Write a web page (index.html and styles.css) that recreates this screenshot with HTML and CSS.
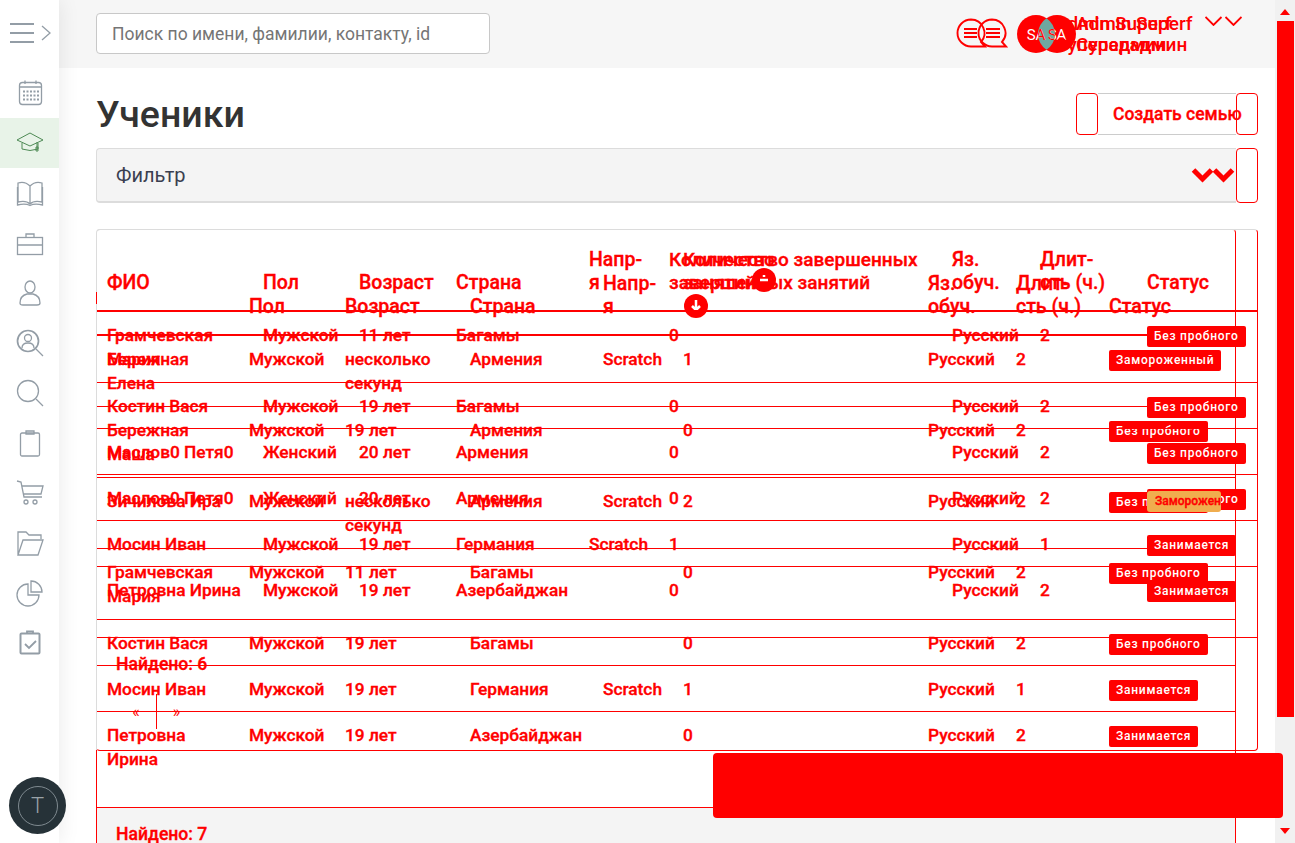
FILE: index.html
```html
<!DOCTYPE html>
<html lang="ru">
  <head>
    <meta charset="UTF-8" />
    <title>Ученики</title>
    <link rel="stylesheet" href="styles.css">
  </head>
  <body>
    <!-- Sidebar -->
    <aside class="sidebar">
      <div class="menu-toggle">
        <svg width="59" height="68" viewBox="0 0 59 68"><path d="M10 24H34M10 33H34M10 42H34" stroke-width="2"/><path d="M42 26L50 33L42 40"/></svg>
      </div>
      <div class="side-item"><svg width="28" height="28" viewBox="0 0 28 28"><rect x="3.5" y="3.5" width="22" height="22" rx="3"/><path d="M9 1.5V5M20 1.5V5M3.5 8H25.5"/><path class="dots" d="M7 12.5H23M7 16.5H23M7 20.5H23"/></svg></div>
      <div class="side-item active"><svg width="28" height="28" viewBox="0 0 28 28"><path d="M1 11L14 4L27 11L14 17Z"/><path d="M6 14V20Q14 23 22 20V14M21 13V21"/><path d="M20 18H22V22H20Z"/></svg></div>
      <div class="side-item"><svg width="28" height="28" viewBox="0 0 28 28"><path d="M14 7C10 3 5 3 2 4V23C6 22 11 22 14 25C17 22 22 22 26 23V4C23 3 18 3 14 7ZM14 7V25"/><path d="M1.5 8V26C6 25 11 25 14 26.5C17 25 22 25 26.5 26V8"/></svg></div>
      <div class="side-item"><svg width="28" height="28" viewBox="0 0 28 28"><rect x="1.5" y="8.5" width="25" height="17"/><path d="M10 8V5H18V8M1.5 16H26.5"/></svg></div>
      <div class="side-item"><svg width="28" height="28" viewBox="0 0 28 28"><ellipse cx="14" cy="8" rx="5" ry="6"/><path d="M4 24C4 19 7 16 11 15H17C21 16 24 19 24 24C24 26 22 26 21 26H7C6 26 4 26 4 24Z"/></svg></div>
      <div class="side-item"><svg width="28" height="28" viewBox="0 0 28 28"><circle cx="12" cy="12" r="10.5" stroke-width="1.7"/><circle cx="12" cy="9" r="3.5"/><path d="M6 19C6 15 9 14 12 14S18 15 18 19M20 20L27 27"/></svg></div>
      <div class="side-item"><svg width="28" height="28" viewBox="0 0 28 28"><circle cx="12" cy="12" r="10.5"/><path d="M20 20L27 27"/></svg></div>
      <div class="side-item"><svg width="28" height="28" viewBox="0 0 28 28"><rect x="4.5" y="4" width="19" height="23" rx="1.5"/><path d="M10 4V2H18V5H10Z"/></svg></div>
      <div class="side-item"><svg width="28" height="28" viewBox="0 0 28 28"><path d="M1 2L5 3L8 18H26M6 7H27L25 15H8"/><circle cx="10" cy="23" r="2"/><circle cx="19" cy="23" r="2"/></svg></div>
      <div class="side-item"><svg width="28" height="28" viewBox="0 0 28 28"><path d="M2 26V3H10L13 6H25V10M2 26H22L27 11H7Z"/></svg></div>
      <div class="side-item"><svg width="28" height="28" viewBox="0 0 28 28"><path d="M12 5A11 11 0 1 0 23 16H12Z"/><path d="M15 2A11 11 0 0 1 26 13H15Z"/></svg></div>
      <div class="side-item"><svg width="28" height="28" viewBox="0 0 28 28"><rect x="4.5" y="4.5" width="19" height="20" rx="1" stroke-width="2"/><path d="M11 4V2.5H17V4M9 15L13 19L20 12" stroke-width="1.8"/></svg></div>
      <div class="fab"><span class="fab-ring">T</span></div>
    </aside>

    <!-- Main column -->
    <div class="main">
      <header class="topbar">
        <input class="search" type="text" placeholder="Поиск по имени, фамилии, контакту, id" />
        <div class="top-right">
          <svg class="chats" width="52" height="32" viewBox="0 0 52 32">
            <path d="M15 1.5A13.5 13.5 0 1 0 15 28.5H29L25 24A13.5 13.5 0 0 0 15 1.5Z"/>
            <path d="M36 1.5A13.5 13.5 0 1 0 36 28.5H50L46 24A13.5 13.5 0 0 0 36 1.5Z"/>
            <path d="M8 11H21M8 15H21M8 19H21M30 11H44M30 15H44M30 19H44"/>
          </svg>
          <svg class="avatars" width="59" height="38" viewBox="0 0 59 38">
            <defs><clipPath id="lens"><path d="M29.5 3.2A19 19 0 0 1 29.5 34.8A19 19 0 0 1 29.5 3.2Z"/></clipPath></defs>
            <circle cx="19" cy="19" r="19"/>
            <circle cx="40" cy="19" r="19"/>
            <path class="lens" d="M29.5 3.2A19 19 0 0 1 29.5 34.8A19 19 0 0 1 29.5 3.2Z"/>
            <text class="av-text" x="19" y="24.5">SA</text>
            <text class="av-text" x="40" y="24.5">SA</text>
            <g clip-path="url(#lens)">
              <text class="av-text over" x="19" y="24.5">SA</text>
              <text class="av-text over" x="40" y="24.5">SA</text>
            </g>
          </svg>
          <div class="who-stack">
            <div class="who">Admin Superf<br>Суперадмин</div>
            <div class="who shifted">Admin Superf<br>Суперадмин</div>
          </div>
          <svg class="chev" width="37" height="10" viewBox="0 0 37 10"><path d="M0.5 1L8.5 9L16.5 1M20.5 1L28.5 9L36.5 1"/></svg>
        </div>
      </header>

      <div class="content">
        <div class="title-row">
          <h1 class="page-title">Ученики</h1>
          <div class="btn-create">
            <span class="btn-cap"></span>
            <span class="btn-mid">Создать семью</span>
            <span class="btn-cap"></span>
          </div>
        </div>

        <div class="filter">
          <div class="filter-bar">
            <span>Фильтр</span>
            <svg class="filter-chev" width="44" height="16" viewBox="0 0 44 16"><path d="M2.5 3L11.5 12L20.5 3M23.5 3L32.5 12L41.5 3"/></svg>
          </div>
          <span class="filter-cap"></span>
        </div>

        <div class="cards">
          <!-- List with seven students -->
          <section class="card card-wide">
            <table class="grid">
              <colgroup>
                <col style="width:142px"><col style="width:96px"><col style="width:125px"><col style="width:133px"><col style="width:80px"><col style="width:245px"><col style="width:88px"><col style="width:93px"><col style="width:136px">
              </colgroup>
              <thead>
                <tr>
                  <th></th><th>Пол</th><th>Возраст</th><th>Страна</th><th>Напр-<br>я</th>
                  <th class="nowrap">Количество завершенных<br>занятий<span class="sort-disc block"><svg width="24" height="24" viewBox="0 0 24 24"><path d="M12 6V15M8 12L12 16L16 12"/></svg></span></th>
                  <th>Яз. обуч.</th><th>Длит-<br>сть (ч.)</th><th>Статус</th>
                </tr>
              </thead>
              <tbody>
                <tr class="tall"><td>Бережная Елена</td><td>Мужской</td><td>несколько секунд</td><td>Армения</td><td>Scratch</td><td>1</td><td>Русский</td><td>2</td><td><span class="badge">Замороженный</span></td></tr>
                <tr class="tall"><td>Бережная Маша</td><td>Мужской</td><td>19 лет</td><td>Армения</td><td></td><td>0</td><td>Русский</td><td>2</td><td><span class="badge">Без пробного</span></td></tr>
                <tr class="tall"><td>Зичилова Ира</td><td>Мужской</td><td>несколько секунд</td><td>Армения</td><td>Scratch</td><td>2</td><td>Русский</td><td>2</td><td><span class="badge">Без пробного</span></td></tr>
                <tr class="tall"><td>Грамчевская Мария</td><td>Мужской</td><td>11 лет</td><td>Багамы</td><td></td><td>0</td><td>Русский</td><td>2</td><td><span class="badge">Без пробного</span></td></tr>
                <tr><td>Костин Вася</td><td>Мужской</td><td>19 лет</td><td>Багамы</td><td></td><td>0</td><td>Русский</td><td>2</td><td><span class="badge">Без пробного</span></td></tr>
                <tr><td>Мосин Иван</td><td>Мужской</td><td>19 лет</td><td>Германия</td><td>Scratch</td><td>1</td><td>Русский</td><td>1</td><td><span class="badge">Занимается</span></td></tr>
                <tr class="tall"><td>Петровна Ирина</td><td>Мужской</td><td>19 лет</td><td>Азербайджан</td><td></td><td>0</td><td>Русский</td><td>2</td><td><span class="badge">Занимается</span></td></tr>
              </tbody>
            </table>
            <footer class="card-foot shaded">
              <p class="found">Найдено: 7</p>
            </footer>
          </section>

          <!-- List with six students, lying over the first one -->
          <section class="card card-over">
            <table class="grid">
              <colgroup>
                <col style="width:156px"><col style="width:96px"><col style="width:97px"><col style="width:133px"><col style="width:80px"><col style="width:283px"><col style="width:88px"><col style="width:107px"><col style="width:120px">
              </colgroup>
              <thead>
                <tr>
                  <th>ФИО</th><th>Пол</th><th>Возраст</th><th>Страна</th><th>Напр-<br>я</th>
                  <th class="nowrap sort-cell">Количество<br>завершенных занятий<span class="sort-disc over"><svg width="24" height="24" viewBox="0 0 24 24"><path d="M8 12H16M12 7V9"/></svg></span></th>
                  <th>Яз. обуч.</th><th>Длит-<br>сть (ч.)</th><th>Статус</th>
                </tr>
              </thead>
              <tbody>
                <tr class="tall"><td>Грамчевская Мария</td><td>Мужской</td><td>11 лет</td><td>Багамы</td><td></td><td>0</td><td>Русский</td><td>2</td><td><span class="badge">Без пробного</span></td></tr>
                <tr><td>Костин Вася</td><td>Мужской</td><td>19 лет</td><td>Багамы</td><td></td><td>0</td><td>Русский</td><td>2</td><td><span class="badge">Без пробного</span></td></tr>
                <tr><td>Маслов0 Петя0</td><td>Женский</td><td>20 лет</td><td>Армения</td><td></td><td>0</td><td>Русский</td><td>2</td><td><span class="badge">Без пробного</span></td></tr>
                <tr><td>Маслов0 Петя0</td><td>Женский</td><td>20 лет</td><td>Армения</td><td></td><td>0</td><td>Русский</td><td>2</td><td><span class="badge">Без пробного</span><span class="badge-mix">Заморожен</span></td></tr>
                <tr><td>Мосин Иван</td><td>Мужской</td><td>19 лет</td><td>Германия</td><td>Scratch</td><td>1</td><td>Русский</td><td>1</td><td><span class="badge">Занимается</span></td></tr>
                <tr><td>Петровна Ирина</td><td>Мужской</td><td>19 лет</td><td>Азербайджан</td><td></td><td>0</td><td>Русский</td><td>2</td><td><span class="badge">Занимается</span></td></tr>
              </tbody>
            </table>
            <footer class="card-foot">
              <p class="found">Найдено: 6</p>
              <div class="pager"><span>«</span><span>»</span></div>
            </footer>
          </section>
        </div>
      </div>
    </div>

    <!-- Scrollbar -->
    <div class="scrollbar">
      <span class="arrow up"></span>
      <span class="thumb"></span>
      <span class="arrow down"></span>
    </div>

    <div class="toast"></div>
  </body>
</html>
```

FILE: styles.css
```css
:root {
  --mark: #ff0000;
  --side-icon: #939da6;
  --line: #dcdcdc;
  --soft-bg: #f4f4f4;
}
* {
  box-sizing: border-box;
}
html, body {
  height: 843px;
  overflow: hidden;
}
body {
  margin: 0;
  display: flex;
  position: relative;
  background: #fff;
  font-family: Roboto, "Noto Sans", sans-serif;
  color: #333;
}
/* Sidebar */
.sidebar {
  width: 59px;
  flex: none;
  display: flex;
  flex-direction: column;
  background: #fff;
  box-shadow: 0 0 22px rgba(0, 0, 0, 0.09);
  z-index: 2;
}
.sidebar svg {
  display: block;
  fill: none;
  stroke: var(--side-icon);
  stroke-width: 1.3;
}
.menu-toggle {
  height: 68px;
}
.side-item {
  height: 50px;
  flex: none;
  display: flex;
  align-items: center;
  justify-content: center;
}
.side-item.active {
  background: #e8f3e8;
}
.sidebar .side-item.active svg {
  stroke: #4e8a55;
  stroke-width: 1;
}
.sidebar .dots {
  stroke-width: 2;
  stroke-dasharray: 2 1.5;
}
.fab {
  margin: auto 0 9px 9px;
  width: 57px;
  height: 57px;
  flex: none;
  border-radius: 50%;
  background: #263238;
  display: flex;
  align-items: center;
  justify-content: center;
}
.fab-ring {
  width: 40px;
  height: 40px;
  border: 1px solid #7f8a90;
  border-radius: 50%;
  color: #9aa3a8;
  font-size: 22px;
  font-weight: 300;
  display: flex;
  align-items: center;
  justify-content: center;
}
/* Top bar */
.main {
  flex: 1;
  min-width: 0;
}
.topbar {
  height: 68px;
  background: #f6f6f6;
  display: flex;
  align-items: center;
  padding: 0 33px 1px 37px;
}
.search {
  width: 394px;
  height: 41px;
  padding: 0 15px;
  border: 1px solid #c8c8c8;
  border-radius: 4px;
  background: #fff;
  font: 400 17.5px Roboto, sans-serif;
}
.search::placeholder {
  color: #757575;
}
.top-right {
  margin-left: auto;
  display: flex;
  align-items: center;
  color: var(--mark);
}
.chats {
  fill: none;
  stroke: var(--mark);
  stroke-width: 1.9;
  margin-right: 9px;
}
.avatars {
  fill: var(--mark);
  margin-right: -21px;
  flex: none;
}
.avatars .lens {
  fill: #6fa8a0;
}
.av-text {
  fill: #fff;
  font-size: 15px;
  text-anchor: middle;
}
.av-text.over {
  fill: var(--mark);
}
.who-stack {
  width: 150px;
  display: grid;
  font-size: 19px;
  font-weight: 500;
  line-height: 21px;
}
.who {
  grid-area: 1 / 1;
  white-space: nowrap;
}
.who.shifted {
  margin-left: 21px;
}
.chev {
  align-self: flex-start;
  margin-top: 3px;
  fill: none;
  stroke: var(--mark);
  stroke-width: 1.8;
}
/* Title row */
.content {
  padding: 25px 17px 0 37px;
}
.title-row {
  display: flex;
  justify-content: space-between;
  align-items: center;
  height: 42px;
}
.page-title {
  margin: 0;
  font-size: 37.5px;
  font-weight: 500;
  line-height: 42px;
}
.btn-create {
  display: flex;
  height: 42px;
}
.btn-cap {
  width: 22px;
  border: 1px solid var(--mark);
  border-radius: 4px;
}
.btn-mid {
  width: 138px;
  padding-left: 15px;
  border-top: 1px solid #ccc;
  border-bottom: 1px solid #ccc;
  color: var(--mark);
  font-size: 17.5px;
  font-weight: 500;
  -webkit-text-stroke: 0.35px var(--mark);
  line-height: 40px;
  white-space: nowrap;
}
/* Filter */
.filter {
  display: flex;
  height: 55px;
  margin-top: 13px;
}
.filter-bar {
  flex: 1;
  display: flex;
  align-items: center;
  justify-content: space-between;
  padding: 0 1px 0 19px;
  background: var(--soft-bg);
  border: 1px solid var(--line);
  border-bottom-width: 2px;
  border-right: 0;
  border-radius: 4px 0 0 4px;
  font-size: 20px;
  color: #3a3f50;
}
.filter-chev {
  fill: none;
  stroke: var(--mark);
  stroke-width: 5;
}
.filter-cap {
  width: 22px;
  border: 1px solid var(--mark);
  border-radius: 4px;
}
/* Student lists */
.cards {
  position: relative;
  margin-top: 26px;
}
.cards::before {
  content: "";
  position: absolute;
  left: 0;
  top: 63px;
  width: 1px;
  height: 12px;
  background: var(--mark);
  z-index: 1;
}
.cards::after {
  content: "";
  position: absolute;
  left: 0;
  top: 521px;
  width: 1px;
  height: 100px;
  background: var(--mark);
  z-index: 1;
}
.card {
  border-top: 1px solid var(--line);
  border-left: 1px solid var(--line);
  border-right: 1px solid var(--mark);
  border-radius: 4px 4px 0 0;
  color: var(--mark);
  font-size: 17.3px;
  font-weight: 500;
  -webkit-text-stroke: 0.35px var(--mark);
}
.card-wide {
  width: 1140px;
  background: #fff;
}
.card-over {
  position: absolute;
  left: 0;
  top: 0;
  width: 1162px;
  height: 522px;
  border-bottom: 1px solid var(--mark);
  border-left-color: transparent;
  border-radius: 4px;
}
.card-over td:first-child {
  padding-right: 0;
}
.grid {
  width: 100%;
  table-layout: fixed;
  border-collapse: collapse;
  margin-bottom: 25px;
}
.grid th {
  padding: 18px 10px 16px;
  border-bottom: 2px solid var(--mark);
  font-size: 19.5px;
  font-weight: 500;
  line-height: 23px;
  text-align: left;
  vertical-align: bottom;
}
.grid th.nowrap {
  font-size: 19px;
  white-space: nowrap;
}
.grid td {
  position: relative;
  height: 46px;
  padding: 11px 10px 0;
  border-bottom: 1px solid var(--mark);
  line-height: 24px;
  vertical-align: top;
}
.grid tr.tall td {
  height: 71px;
}
.grid tbody tr:last-child td {
  border-bottom: 0;
}
.sort-cell {
  position: relative;
}
.sort-disc {
  width: 24px;
  height: 24px;
  border-radius: 50%;
  background: var(--mark);
  display: inline-block;
}
.sort-disc svg {
  display: block;
  fill: none;
  stroke: #fff;
  stroke-width: 2.5;
}
.sort-disc.block {
  display: block;
  margin-left: 1px;
}
.sort-disc.over {
  position: absolute;
  left: 93px;
  bottom: 18px;
}
.badge {
  display: inline-block;
  vertical-align: top;
  margin-top: 3px;
  padding: 3px 7px;
  border-radius: 2px;
  background: var(--mark);
  color: #fff;
  -webkit-text-stroke: 0;
  font-size: 12px;
  font-weight: 500;
  line-height: 15px;
  letter-spacing: 0.75px;
  white-space: nowrap;
}
.badge-mix {
  position: absolute;
  left: 10px;
  top: 16px;
  width: 74px;
  height: 21px;
  padding-left: 8px;
  border-radius: 3px;
  background: #f0ad4e;
  color: var(--mark);
  font-size: 12px;
  line-height: 21px;
}
.card-foot {
  border-top: 1px solid var(--mark);
  padding: 14px 19px 0;
}
.card-foot.shaded {
  background: var(--soft-bg);
  height: 120px;
}
.found {
  margin: 0;
  font-size: 17.6px;
  font-weight: 500;
  line-height: 24px;
}
.pager {
  display: flex;
  margin-top: 18px;
  font-size: 16px;
  font-weight: 400;
  -webkit-text-stroke: 0;
  line-height: 35px;
}
.pager span {
  width: 40px;
  height: 35px;
  text-align: center;
}
.pager span + span {
  border-left: 1px solid var(--mark);
}
/* Scrollbar */
.scrollbar {
  width: 20px;
  flex: none;
  display: flex;
  flex-direction: column;
  align-items: center;
  height: 843px;
  background: #f1f1f1;
  padding-top: 9px;
}
.arrow {
  width: 0;
  height: 0;
  border-left: 5px solid transparent;
  border-right: 5px solid transparent;
}
.arrow.up {
  border-bottom: 6px solid var(--mark);
}
.arrow.down {
  border-top: 6px solid var(--mark);
  margin-top: 111px;
}
.thumb {
  width: 17px;
  height: 696px;
  margin-top: 6px;
  background: var(--mark);
}
.toast {
  position: absolute;
  left: 713px;
  top: 753px;
  width: 570px;
  height: 65px;
  border-radius: 4px;
  background: var(--mark);
  z-index: 3;
}
```
